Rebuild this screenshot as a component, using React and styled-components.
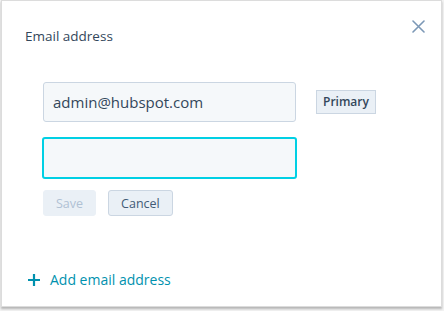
import React, { useState } from "react";
import styled, { createGlobalStyle } from "styled-components";

const GlobalStyle = createGlobalStyle`
	html, body {
		margin: 0;
		padding: 0;
		background: #f2f2f2;
	}
	body {
		font-family: "Open Sans", "Lato", sans-serif;
		color: #33475b;
	}
`;

export default function App() {
	const [value, setValue] = useState("");

	return (
		<Page>
			<GlobalStyle />
			<Card>
				<Header>
					<Title>Email address</Title>
					<CloseButton aria-label="Close">
						<svg width="13" height="13" viewBox="0 0 13 13">
							<path d="M1 1 L12 12 M12 1 L1 12" stroke="#7c98b6" strokeWidth="1.6" strokeLinecap="round" />
						</svg>
					</CloseButton>
				</Header>

				<Body>
					<Row>
						<Field readOnly value="admin@hubspot.com" />
						<Tag>Primary</Tag>
					</Row>
					<Row>
						<Field focused value={value} onChange={(e) => setValue(e.target.value)} />
					</Row>
					<Actions>
						<Button disabled>Save</Button>
						<Button>Cancel</Button>
					</Actions>
				</Body>

				<AddLink>
					<svg width="14" height="14" viewBox="0 0 14 14">
						<path d="M7 1 V13 M1 7 H13" stroke="#0091ae" strokeWidth="2.2" />
					</svg>
					Add email address
				</AddLink>
			</Card>
		</Page>
	);
}

const Page = styled.div`
	width: 444px;
	height: 311px;
	padding: 0 2px 4px 1px;
	box-sizing: border-box;
`;

const Card = styled.div`
	height: 100%;
	box-sizing: border-box;
	background: #fff;
	border: 1px solid #dcdcdc;
	box-shadow: 0 2px 2px rgba(0, 0, 0, 0.25);
	display: flex;
	flex-direction: column;
`;

const Header = styled.div`
	display: flex;
	justify-content: space-between;
	align-items: flex-start;
	padding: 26px 16px 0 23px;
`;

const Title = styled.h2`
	margin: 0;
	font-size: 13.5px;
	font-weight: 400;
	line-height: 18px;
	color: #33475b;
`;

const CloseButton = styled.button`
	border: none;
	background: none;
	padding: 0;
	margin-top: -7px;
	cursor: pointer;
	display: flex;
`;

const Body = styled.div`
	padding: 37px 0 0 40px;
	display: flex;
	flex-direction: column;
	gap: 15px;
`;

const Row = styled.div`
	display: flex;
	align-items: center;
	gap: 20px;
`;

const Field = styled.input`
	width: ${(p) => (p.focused ? "255px" : "253px")};
	height: ${(p) => (p.focused ? "42px" : "40px")};
	box-sizing: border-box;
	background: #f5f8fa;
	border: ${(p) => (p.focused ? "2px solid #00d0e4" : "1px solid #cbd6e2")};
	border-radius: 3px;
	padding: 0 9px;
	margin-left: ${(p) => (p.focused ? "0" : "1px")};
	font-family: inherit;
	font-size: 15px;
	color: #33475b;
	outline: none;
`;

const Tag = styled.span`
	background: #eaf0f6;
	border: 1px solid #cbd6e2;
	padding: 3px 6px;
	font-size: 12px;
	font-weight: 600;
	color: #33475b;
	line-height: 16px;
`;

const Actions = styled.div`
	display: flex;
	gap: 12px;
	margin-top: -4px;
	padding-left: 1px;
`;

const Button = styled.button`
	height: 26px;
	padding: 0 12px;
	font-family: inherit;
	font-size: 12.5px;
	background: #eaf0f6;
	border-radius: 3px;
	border: 1px solid ${(p) => (p.disabled ? "#eaf0f6" : "#cbd6e2")};
	color: ${(p) => (p.disabled ? "#b0c1d4" : "#425b76")};
	cursor: ${(p) => (p.disabled ? "not-allowed" : "pointer")};
	min-width: 52px;
`;

const AddLink = styled.a`
	margin-top: auto;
	margin-bottom: 17px;
	margin-left: 25px;
	display: inline-flex;
	align-items: center;
	gap: 9px;
	font-size: 14px;
	color: #0091ae;
	cursor: pointer;
	align-self: flex-start;
`;
